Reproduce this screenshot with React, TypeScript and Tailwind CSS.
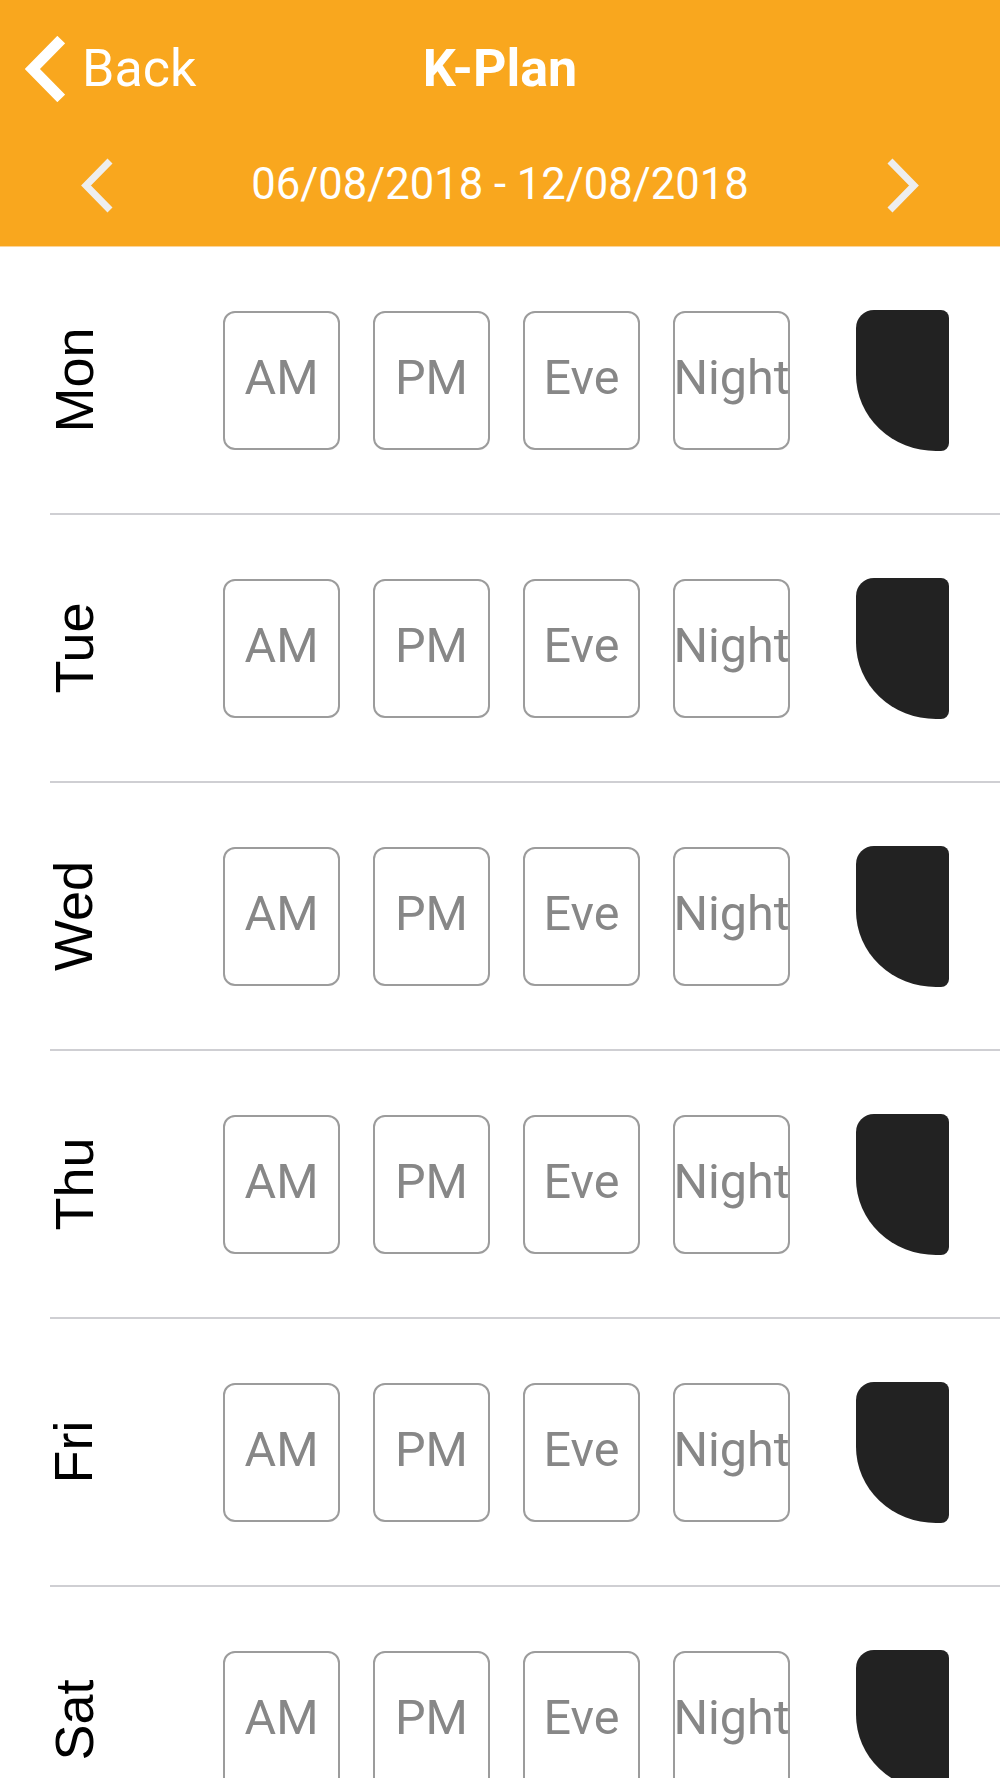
import React from "react";

const days = ["Mon", "Tue", "Wed", "Thu", "Fri", "Sat", "Sun"];
const slots = ["AM", "PM", "Eve", "Night"];

const Chevron: React.FC<{ dir: "left" | "right"; className?: string; stroke?: number }> = ({ dir, className, stroke = 7 }) => (
  <svg viewBox="0 0 33 55" className={className} fill="none">
    <polyline
      points={dir === "left" ? "30,3 6,27.5 30,52" : "3,3 27,27.5 3,52"}
      stroke="currentColor"
      strokeWidth={stroke}
      strokeLinejoin="miter"
    />
  </svg>
);

const DayRow: React.FC<{ day: string }> = ({ day }) => (
  <div className="ml-[50px] flex h-[268px] items-center border-b-2 border-[#cfcfd3]">
    {/* rotated day label */}
    <div className="flex h-[139px] w-[47px] items-center justify-center">
      <span className="-rotate-90 whitespace-nowrap text-[54px] leading-none text-black [font-family:'Liberation_Sans',Arial,sans-serif]">
        {day}
      </span>
    </div>

    {/* slot boxes */}
    <div className="ml-[126px] flex gap-[33px]">
      {slots.map((s) => (
        <button
          key={s}
          className="flex h-[139px] w-[117px] items-center justify-center rounded-[12px] border-2 border-[#9c9c9c] pb-[4px] text-[48.5px] leading-none text-[#878787] [font-family:Roboto,sans-serif]"
        >
          {s}
        </button>
      ))}
    </div>

    {/* dark tab */}
    <div className="ml-[66px] h-[141px] w-[93px] rounded-tl-[18px] rounded-tr-[8px] rounded-br-[8px] rounded-bl-[80px_76px] bg-[#222222]" />
  </div>
);

export default function App() {
  return (
    <div className="h-[1778px] w-[1000px] overflow-hidden bg-white [font-family:Roboto,sans-serif]">
      {/* Header */}
      <header className="flex h-[247px] flex-col border-b border-[#fcd59a] bg-[#f9a71e] text-white">
        <div className="grid h-[137px] grid-cols-[1fr_auto_1fr] items-center">
          <button className="flex items-center pl-[25px]">
            <Chevron dir="left" stroke={9} className="h-[66px] w-[40px] text-white" />
            <span className="ml-[17px] text-[52px] leading-none">Back</span>
          </button>
          <h1 className="text-[52px] font-bold leading-none">K-Plan</h1>
          <div />
        </div>
        <div className="flex h-[96px] items-center justify-between px-[80px]">
          <button>
            <Chevron dir="left" className="h-[55px] w-[33px] text-[#eeeeee]" />
          </button>
          <span className="text-[43.6px] leading-none">06/08/2018 - 12/08/2018</span>
          <button>
            <Chevron dir="right" className="h-[55px] w-[33px] text-[#eeeeee]" />
          </button>
        </div>
      </header>

      {/* Week */}
      <div>
        {days.map((d) => (
          <DayRow key={d} day={d} />
        ))}
      </div>
    </div>
  );
}
